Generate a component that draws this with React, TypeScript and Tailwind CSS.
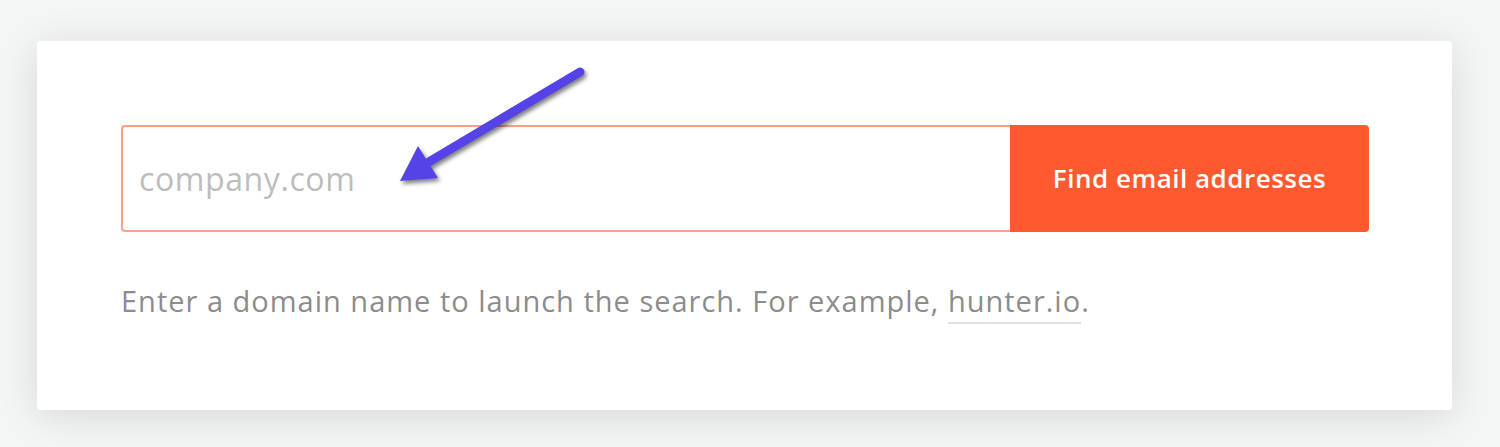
import React from 'react';

export default function App() {
  return (
    <div className="min-h-[447px] w-[1500px] bg-[#f4f5f5] pl-[37px] pt-[41px] font-['Open_Sans',sans-serif]">
      <div className="relative w-[1415px] h-[369px] rounded-[4px] bg-white px-[84px] pt-[84px] shadow-[0_6px_40px_rgba(0,0,0,0.12)]">
        <div className="flex h-[107px] w-[1248px]">
          <input
            type="text"
            placeholder="company.com"
            className="h-full flex-1 rounded-l-[4px] border-2 border-r-0 border-solid border-[#ffa086] bg-white pl-[16px] text-[32px] tracking-[0.6px] text-gray-700 outline-none placeholder:text-[#bdbdbd]"
          />
          <button className="h-full w-[359px] rounded-r-[4px] bg-[#ff5a2f] text-[26px] font-semibold tracking-[0.5px] text-white">
            Find email addresses
          </button>
        </div>
        <p className="mt-[47px] text-[29px] tracking-[1px] text-[#8c8c8c]">
          Enter a domain name to launch the search. For example,{' '}
          <span className="border-b-2 border-[#e2e2e2] pb-[2px]">hunter.io</span>.
        </p>

        {/* annotation arrow drawn over the form */}
        <svg
          className="absolute left-[350px] top-[20px] drop-shadow-[2px_3px_2px_rgba(0,0,0,0.5)]"
          width="250"
          height="180"
          viewBox="0 0 250 180"
        >
          <line x1="193" y1="11" x2="40" y2="102" stroke="#5643e8" strokeWidth="9" strokeLinecap="round" />
          <polygon points="13,120 31,85 51,117" fill="#5643e8" />
        </svg>
      </div>
    </div>
  );
}
